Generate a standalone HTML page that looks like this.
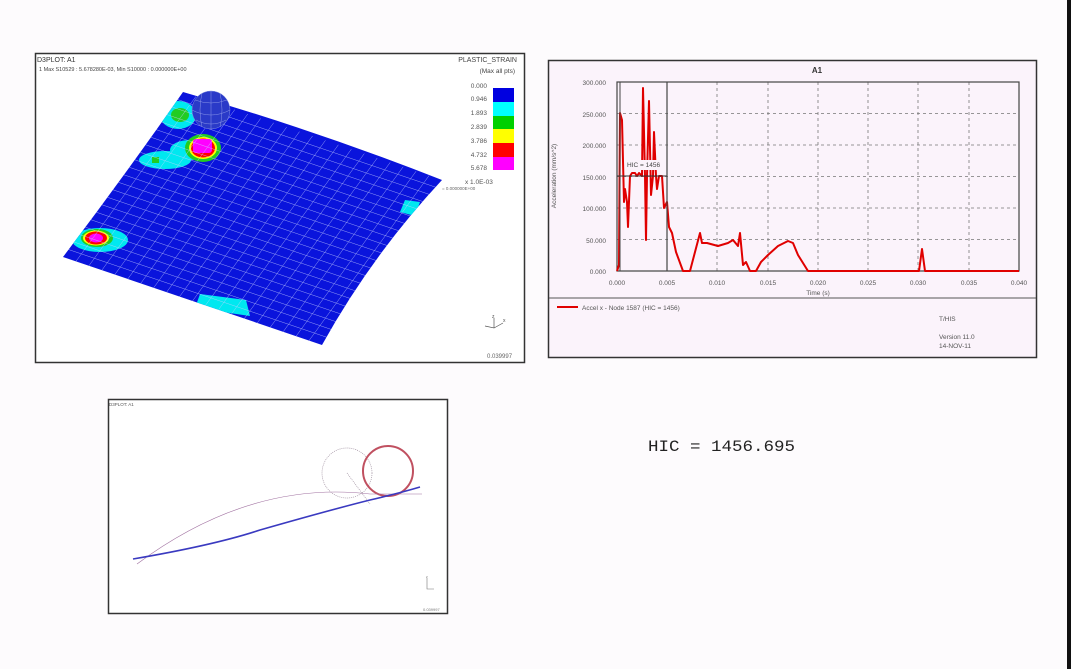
<!DOCTYPE html>
<html><head><meta charset="utf-8"><style>
html,body{margin:0;padding:0;background:#fdfbfd;width:1071px;height:669px;overflow:hidden}
svg{display:block}
text{font-family:"Liberation Sans",sans-serif}
</style></head><body>
<svg width="1071" height="669" viewBox="0 0 1071 669">
<rect x="0" y="0" width="1071" height="669" fill="#fdfbfd"/>
<rect x="1067" y="0" width="4" height="669" fill="#111"/>

<!-- Panel 1 -->
<rect x="35.5" y="53.5" width="489" height="309" fill="#fff" stroke="#333" stroke-width="1.5"/>
<text x="37" y="62" font-size="7" fill="#333">D3PLOT: A1</text>
<text x="39" y="71" font-size="5.5" fill="#444">1  Max S10529 : 5.678280E-03, Min S10000 : 0.000000E+00</text>
<text x="517" y="62" font-size="7" fill="#444" text-anchor="end">PLASTIC_STRAIN</text>
<text x="515" y="73" font-size="6.5" fill="#444" text-anchor="end">(Max all pts)</text>
<g font-size="6.5" fill="#555" text-anchor="end">
<text x="487" y="88">0.000</text><text x="487" y="101">0.946</text><text x="487" y="115">1.893</text><text x="487" y="129">2.839</text><text x="487" y="143">3.786</text><text x="487" y="157">4.732</text><text x="487" y="170">5.678</text>
</g>
<rect x="493" y="88" width="21" height="14" fill="#0000e0"/>
<rect x="493" y="102" width="21" height="14" fill="#00ffff"/>
<rect x="493" y="116" width="21" height="13" fill="#00d000"/>
<rect x="493" y="129" width="21" height="14" fill="#ffff00"/>
<rect x="493" y="143" width="21" height="14" fill="#ff0000"/>
<rect x="493" y="157" width="21" height="13" fill="#ff00ff"/>
<text x="465" y="184" font-size="6.5" fill="#555">x  1.0E-03</text>
<text x="442" y="190" font-size="4.5" fill="#666">= 0.000000E+00</text>
<text x="487" y="358" font-size="6" fill="#666">0.039997</text>
<g stroke="#555" stroke-width="0.7" fill="none"><path d="M494 318 L494 328 L485 326 M494 328 L503 323"/></g>
<text x="492" y="318" font-size="5" fill="#555">z</text><text x="503" y="322" font-size="5" fill="#555">x</text>

<path d="M183 92 Q315 130 442 180 Q372 255 322 345 Q190 300 63 257 Q125 175 183 92 Z" fill="#0a14dc"/>
<clipPath id="pc"><path d="M183 92 Q315 130 442 180 Q372 255 322 345 Q190 300 63 257 Q125 175 183 92 Z"/></clipPath>
<g clip-path="url(#pc)">
<ellipse cx="178" cy="115" rx="18" ry="14" fill="#00e8f0"/>
<ellipse cx="165" cy="160" rx="26" ry="9" fill="#00e8f0"/>
<ellipse cx="190" cy="150" rx="20" ry="10" fill="#00e8f0"/>
<ellipse cx="180" cy="115" rx="9" ry="7" fill="#22cc22"/>
<rect x="152" y="157" width="7" height="6" fill="#22cc22"/>
<ellipse cx="203" cy="148" rx="18" ry="14" fill="#22cc22"/>
<ellipse cx="203" cy="148" rx="14" ry="11" fill="#ffff00"/>
<ellipse cx="203" cy="148" rx="12" ry="9.5" fill="#ff0000"/>
<rect x="193" y="139" width="19" height="14" rx="3" fill="#ff00ff"/>
<ellipse cx="100" cy="240" rx="28" ry="12" fill="#00e8f0"/>
<ellipse cx="97" cy="238" rx="16" ry="9" fill="#22cc22"/>
<ellipse cx="96" cy="238" rx="13" ry="7.5" fill="#ffff00"/>
<ellipse cx="96" cy="238" rx="11" ry="6.5" fill="#ff0000"/>
<ellipse cx="96" cy="238" rx="7" ry="4.5" fill="#ff00ff"/>
<path d="M200 294 L246 300 L250 316 L195 308 Z" fill="#00e8f0"/>
<path d="M405 200 L420 202 L415 216 L400 212 Z" fill="#00e8f0"/>
<g id="grid" stroke="#c8d0ff" stroke-width="0.5" opacity="0.75"></g>
</g>
<circle cx="211" cy="110" r="19" fill="#2a3ac8" stroke="#8090e0" stroke-width="0.5"/>
<path d="M192 110 Q211 120 230 110 M195 100 Q211 106 227 100 M196 120 Q211 128 226 120 M211 91 L211 129 M202 93 Q198 110 202 127 M220 93 Q224 110 220 127" stroke="#8a96e8" stroke-width="0.5" fill="none"/>

<!-- Panel 2 chart -->
<rect x="548.5" y="60.5" width="488" height="297" fill="#fbf3fb" stroke="#333" stroke-width="1.5"/>
<line x1="549" y1="298" x2="1036" y2="298" stroke="#555" stroke-width="1"/>
<text x="817" y="73" font-size="8" font-weight="bold" fill="#333" text-anchor="middle">A1</text>
<g stroke="#777" stroke-width="0.8" stroke-dasharray="3,3">
<line x1="667" y1="82" x2="667" y2="271"/><line x1="717" y1="82" x2="717" y2="271"/><line x1="768" y1="82" x2="768" y2="271"/><line x1="818" y1="82" x2="818" y2="271"/><line x1="868" y1="82" x2="868" y2="271"/><line x1="918" y1="82" x2="918" y2="271"/><line x1="969" y1="82" x2="969" y2="271"/>
<line x1="617" y1="239.5" x2="1019" y2="239.5"/><line x1="617" y1="208" x2="1019" y2="208"/><line x1="617" y1="176.5" x2="1019" y2="176.5"/><line x1="617" y1="145" x2="1019" y2="145"/><line x1="617" y1="113.5" x2="1019" y2="113.5"/>
</g>
<rect x="617" y="82" width="402" height="189" fill="none" stroke="#444" stroke-width="1.2"/>
<g font-size="6.5" fill="#555" text-anchor="end">
<text x="606" y="85">300.000</text><text x="606" y="117">250.000</text><text x="606" y="148">200.000</text><text x="606" y="180">150.000</text><text x="606" y="211">100.000</text><text x="606" y="243">50.000</text><text x="606" y="274">0.000</text>
</g>
<g font-size="6.5" fill="#555" text-anchor="middle">
<text x="617" y="285">0.000</text><text x="667" y="285">0.005</text><text x="717" y="285">0.010</text><text x="768" y="285">0.015</text><text x="818" y="285">0.020</text><text x="868" y="285">0.025</text><text x="918" y="285">0.030</text><text x="969" y="285">0.035</text><text x="1019" y="285">0.040</text>
<text x="818" y="295">Time (s)</text>
</g>
<text transform="translate(556,176) rotate(-90)" font-size="6.5" fill="#555" text-anchor="middle">Acceleration (mm/s^2)</text>
<polyline fill="none" stroke="#e00000" stroke-width="2" stroke-linejoin="round" points="617,271 619,265 620,113 622,120 624,202 625,189 627,202 628,227 630,176 632,173 635,173 637,176 639,173 642,176 643,88 645,176 646,240 647,176 649,101 651,195 653,176 654,132 656,176 657,189 659,176 662,176 664,208 667,202 669,227 672,233 676,252 683,271 690,271 695,252 700,233 702,243 707,243 718,246 728,243 733,240 738,246 740,233 743,265 746,262 750,271 756,271 761,262 768,255 778,246 788,241 793,243 798,255 808,271 919,271 922,249 925,271 1019,271"/>
<rect x="626" y="160" width="40" height="10" fill="#fbf3fb"/>
<text x="627" y="167" font-size="6.5" fill="#444">HIC = 1456</text>
<line x1="617" y1="176" x2="667" y2="176" stroke="#333" stroke-width="1"/>
<line x1="667" y1="82" x2="667" y2="271" stroke="#444" stroke-width="1.2"/>
<line x1="620" y1="82" x2="620" y2="271" stroke="#444" stroke-width="1"/>
<line x1="557" y1="307" x2="578" y2="307" stroke="#e00000" stroke-width="2"/>
<text x="582" y="310" font-size="6.5" fill="#555">Accel x - Node 1587 (HIC = 1456)</text>
<text x="939" y="321" font-size="6.5" fill="#555">T/HIS</text>
<text x="939" y="339" font-size="6.5" fill="#555">Version 11.0</text>
<text x="939" y="348" font-size="6.5" fill="#555">14-NOV-11</text>

<!-- Panel 3 -->
<rect x="108.5" y="399.5" width="339" height="214" fill="#fff" stroke="#333" stroke-width="1.5"/>
<text x="109" y="406" font-size="4.5" fill="#555">D3PLOT: A1</text>
<circle cx="347" cy="473" r="25" fill="none" stroke="#a090a0" stroke-width="0.7" stroke-dasharray="1,1"/>
<line x1="347" y1="473" x2="370" y2="504" stroke="#a090a0" stroke-width="0.7" stroke-dasharray="1,1"/>
<circle cx="388" cy="471" r="25" fill="none" stroke="#c05060" stroke-width="2"/>
<path d="M137 564 Q250 480 370 494 L422 494" fill="none" stroke="#a070a0" stroke-width="0.6"/>
<path d="M133 559 Q215 545 260 530 Q330 510 370 500 Q400 493 420 487" fill="none" stroke="#3a3ac0" stroke-width="1.6"/>
<path d="M427 578 L427 589 L434 589" stroke="#777" stroke-width="0.6" fill="none"/>
<text x="426" y="578" font-size="3.5" fill="#777">z</text>
<text x="423" y="611" font-size="4" fill="#777">0.039997</text>

<text x="648" y="451" font-size="16" fill="#222" textLength="147" lengthAdjust="spacingAndGlyphs" style="font-family:'Liberation Mono',monospace">HIC = 1456.695</text>
</svg>
<script>
(function(){
var A=[183,92],B=[442,180],C=[322,345],D=[63,257],g=document.getElementById('grid'),n=20,m=22,s='';
function P(u,v){return [(1-u)*(1-v)*A[0]+u*(1-v)*B[0]+u*v*C[0]+(1-u)*v*D[0],(1-u)*(1-v)*A[1]+u*(1-v)*B[1]+u*v*C[1]+(1-u)*v*D[1]];}
for(var i=1;i<n;i++){var u=i/n,a=P(u,0),b=P(u,1);s+='<line x1="'+a[0]+'" y1="'+a[1]+'" x2="'+b[0]+'" y2="'+b[1]+'"/>';}
for(var j=1;j<m;j++){var v=j/m,a=P(0,v),b=P(1,v);s+='<line x1="'+a[0]+'" y1="'+a[1]+'" x2="'+b[0]+'" y2="'+b[1]+'"/>';}
g.innerHTML=s;})();
</script>
</body></html>
